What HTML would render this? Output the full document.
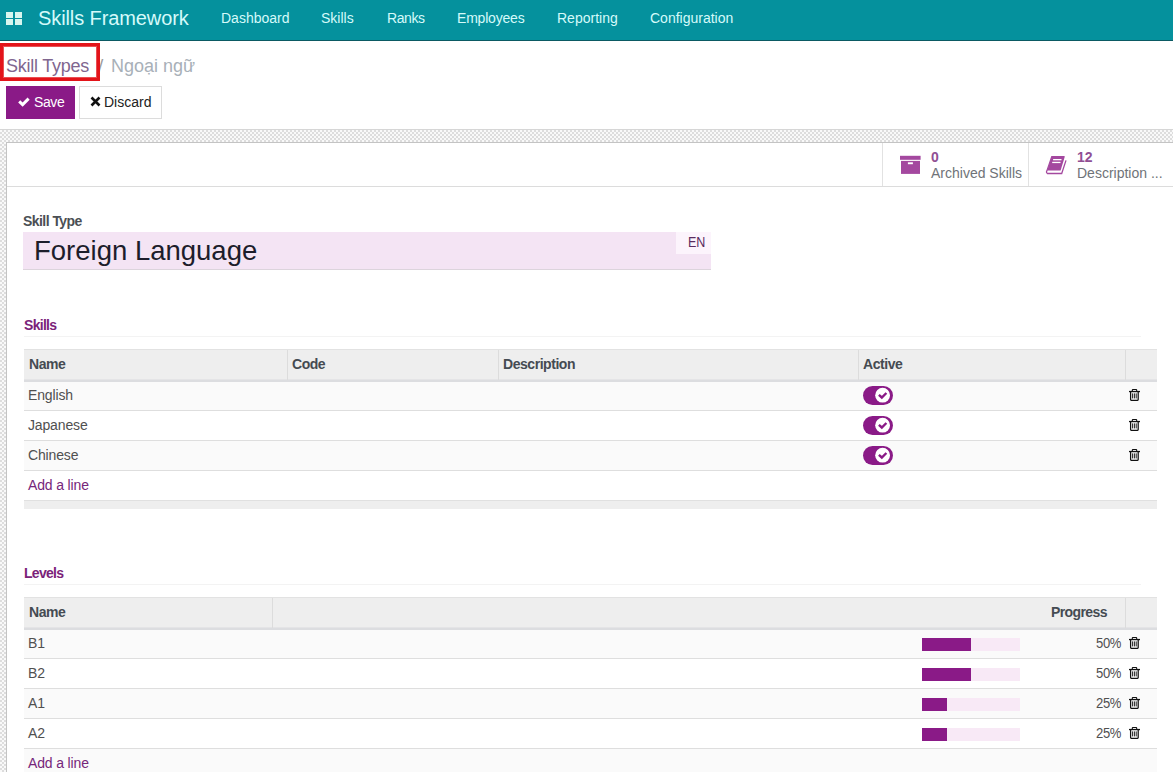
<!DOCTYPE html>
<html><head><meta charset="utf-8">
<style>
*{box-sizing:border-box;margin:0;padding:0}
html,body{width:1173px;height:772px;overflow:hidden;background:#fff;font-family:"Liberation Sans",sans-serif;position:relative}
.a{position:absolute;white-space:nowrap}
#nav{left:0;top:0;width:1173px;height:41px;background:#05919d;border-bottom:1px solid #0b5a63}
.grid{left:6px;top:12px;width:16px;height:14px}
.grid i{position:absolute;width:7px;height:6px;background:#d8f6ef}
.brand{left:38px;top:4px;font-size:20px;line-height:28px;color:#d5fafa;letter-spacing:-0.1px}
.mi{top:9px;font-size:14px;line-height:18px;color:#d5fafa}
#bc{left:6px;top:53px;font-size:18px;line-height:24px}
.redbox{left:0;top:43px;width:100px;height:38px;border:3px solid #e3141a;box-shadow:inset 0 0 0 1px rgba(227,20,26,.75)}
.btn{top:86px;height:33px;font-size:14px;line-height:32px}
#bg{left:0;top:129px;width:1173px;height:643px;border-top:1px solid #d6d6d6;
 background:repeating-conic-gradient(#dddddd 0 25%,#f9f9f9 0 50%) 0 0/4px 4px}
#sheet{left:6px;top:142px;width:1200px;height:700px;background:#fff;border:1px solid #c4c4c4}
.hl{background:#dcdde0;box-shadow:0 -1px 0 #e4e4e6}
.th{font-weight:bold;font-size:14px;line-height:18px;color:#454b52;letter-spacing:-0.45px}
.td{font-size:14px;line-height:18px;color:#505050;letter-spacing:-0.15px}
.add{font-size:14px;line-height:18px;color:#76267a;letter-spacing:-0.15px}
.sec{font-weight:bold;font-size:14px;line-height:18px;color:#7b2279;letter-spacing:-0.7px}
.rl{left:24px;width:1133px;height:1px;background:#dedede}
.rg{left:24px;width:1133px;background:#fafafa}
.cs{width:1px;height:30px;background:#dcdcdc}
</style></head><body>
<div id="nav" class="a">
  <div class="a grid"><i style="left:0;top:0"></i><i style="left:9px;top:0"></i><i style="left:0;top:7px"></i><i style="left:9px;top:7px"></i></div>
  <div class="a brand">Skills Framework</div>
  <div class="a mi" style="left:221px">Dashboard</div>
  <div class="a mi" style="left:321px">Skills</div>
  <div class="a mi" style="left:387px;letter-spacing:-0.4px">Ranks</div>
  <div class="a mi" style="left:457px;letter-spacing:-0.2px">Employees</div>
  <div class="a mi" style="left:557px">Reporting</div>
  <div class="a mi" style="left:650px">Configuration</div>
</div>
<div id="bc" class="a" style="top:54px"><span style="color:#80668f;letter-spacing:-0.25px">Skill Types</span></div>
<div class="a" style="left:98px;top:54px;font-size:19px;line-height:24px;color:#9c9c9c">/</div>
<div class="a" style="left:111px;top:54px;font-size:18px;line-height:24px;color:#a8b0b8">Ngoại ngữ</div>
<div class="a redbox"></div>
<div class="a btn" style="left:6px;width:69px;background:#8a1a87;color:#fff">
  <svg class="a" style="left:11px;top:10px" width="14" height="11" viewBox="0 0 14 11"><path d="M2.2 5.4 L5.6 8.6 L11.6 2.6" stroke="#fff" stroke-width="3" fill="none"/></svg>
  <span class="a" style="left:28px;top:0px;letter-spacing:-0.4px">Save</span>
</div>
<div class="a btn" style="left:79px;width:83px;background:#fff;border:1px solid #dcdcdc;color:#222">
  <svg class="a" style="left:10px;top:9px" width="11" height="11" viewBox="0 0 11 11"><path d="M1.5 1.5 L9.5 9.5 M9.5 1.5 L1.5 9.5" stroke="#111" stroke-width="2.6" fill="none"/></svg>
  <span class="a" style="left:24px;top:-1px">Discard</span>
</div>
<div id="bg" class="a"></div>
<div id="sheet" class="a"></div>
<div class="a" style="left:7px;top:186px;width:1166px;height:1px;background:#dcdcdc"></div>
<div class="a" style="left:882px;top:143px;width:1px;height:43px;background:#e2e2e2"></div>
<div class="a" style="left:1028px;top:143px;width:1px;height:43px;background:#e2e2e2"></div>
<svg class="a" style="left:900px;top:155px" width="21" height="20" viewBox="0 0 21 20">
  <rect x="0" y="0.8" width="20.6" height="4" fill="#a4489f"/>
  <rect x="1" y="5.9" width="19" height="13" fill="#a4489f"/>
  <rect x="7.9" y="7.3" width="5" height="1.9" fill="#fff"/>
</svg>
<div class="a" style="left:931px;top:149px;font-size:14px;line-height:16px;font-weight:bold;color:#904f94">0</div>
<div class="a" style="left:931px;top:165px;font-size:14px;line-height:16px;color:#6f7378">Archived Skills</div>
<svg class="a" style="left:1042px;top:152px" width="28" height="26" viewBox="0 0 28 26">
  <path d="M9.9 4.1 L22.2 4.1 Q22.9 4.2 22.7 5 L18.6 18.5 L5.1 18.5 Z" fill="#a4489f"/>
  <path d="M9.9 4.1 L4.9 18.6" stroke="#a4489f" stroke-width="1.2"/>
  <path d="M5.2 18.3 Q3.6 20.2 5.4 21.5 L19.7 21.5 L24 8.4" stroke="#a4489f" stroke-width="1.3" fill="none"/>
  <rect x="11.1" y="7.0" width="8.4" height="1.3" fill="#fff"/>
  <rect x="10.2" y="9.8" width="8.3" height="1.3" fill="#fff"/>
</svg>
<div class="a" style="left:1077px;top:149px;font-size:14px;line-height:16px;font-weight:bold;color:#904f94">12</div>
<div class="a" style="left:1077px;top:165px;font-size:14px;line-height:16px;color:#6f7378">Description ...</div>
<div class="a" style="left:23px;top:212px;font-size:14px;line-height:18px;font-weight:bold;color:#4b4f54;letter-spacing:-0.55px">Skill Type</div>
<div class="a" style="left:23px;top:232px;width:688px;height:38px;background:#f4e4f4;border-bottom:1px solid #dcd4dc"></div>
<div class="a" style="left:676px;top:232px;width:35px;height:22px;background:#fcf4fc"></div>
<div class="a" style="left:688px;top:233px;font-size:14.6px;line-height:18px;color:#5a2c60;transform:scaleX(0.86);transform-origin:0 0">EN</div>
<div class="a" style="left:34px;top:235px;font-size:27.5px;line-height:32px;color:#1d1d2b">Foreign Language</div>

<div class="a sec" style="left:24px;top:316px">Skills</div>
<div class="a" style="left:24px;top:336px;width:1117px;height:1px;background:#f3f3f3"></div>
<div class="a" style="left:24px;top:349px;width:1133px;height:31px;background:#eeeeee;border-top:1px solid #e2e2e2"></div>
<div class="a hl" style="left:24px;top:380px;width:1133px;height:2px"></div>
<div class="a cs" style="left:287px;top:350px"></div>
<div class="a cs" style="left:498px;top:350px"></div>
<div class="a cs" style="left:858px;top:350px"></div>
<div class="a cs" style="left:1125px;top:350px"></div>
<div class="a th" style="left:29px;top:355px">Name</div>
<div class="a th" style="left:292px;top:355px">Code</div>
<div class="a th" style="left:503px;top:355px">Description</div>
<div class="a th" style="left:863px;top:355px">Active</div>
<div class="a rg" style="top:382px;height:28px"></div>
<div class="a rl" style="top:410px"></div>
<div class="a rl" style="top:440px"></div>
<div class="a rg" style="top:441px;height:29px"></div>
<div class="a rl" style="top:470px"></div>
<div class="a" style="left:24px;top:500px;width:1133px;height:9px;background:#eeeeee;border-top:1px solid #e0e0e0"></div>
<div class="a td" style="left:28px;top:386px">English</div>
<svg class="a" style="left:863px;top:386px" width="30" height="19" viewBox="0 0 30 19"><rect x="0" y="0" width="30" height="19" rx="9.5" fill="#8a1a87"/><circle cx="19.6" cy="9.2" r="7.4" fill="#fff"/><path d="M15.9 8.9 L18.8 11.5 L23.4 7" stroke="#8a1a87" stroke-width="2.4" fill="none"/></svg>
<svg class="a" style="left:1129px;top:389px" width="11" height="12" viewBox="0 0 11 12"><path d="M3.3 2 L3.3 1.2 Q3.3 0.5 4 0.5 L7 0.5 Q7.7 0.5 7.7 1.2 L7.7 2" stroke="#111" stroke-width="1.1" fill="none"/><rect x="0" y="1.9" width="11" height="1.3" fill="#111"/><path d="M1.6 3 L1.6 10.4 Q1.6 11.4 2.6 11.4 L8.2 11.4 Q9.2 11.4 9.2 10.4 L9.2 3" stroke="#111" stroke-width="1.25" fill="none"/><rect x="3.1" y="4.4" width="1" height="5" fill="#222"/><rect x="4.9" y="4.4" width="1" height="5" fill="#222"/><rect x="6.7" y="4.4" width="1" height="5" fill="#222"/></svg>
<div class="a td" style="left:28px;top:416px">Japanese</div>
<svg class="a" style="left:863px;top:416px" width="30" height="19" viewBox="0 0 30 19"><rect x="0" y="0" width="30" height="19" rx="9.5" fill="#8a1a87"/><circle cx="19.6" cy="9.2" r="7.4" fill="#fff"/><path d="M15.9 8.9 L18.8 11.5 L23.4 7" stroke="#8a1a87" stroke-width="2.4" fill="none"/></svg>
<svg class="a" style="left:1129px;top:419px" width="11" height="12" viewBox="0 0 11 12"><path d="M3.3 2 L3.3 1.2 Q3.3 0.5 4 0.5 L7 0.5 Q7.7 0.5 7.7 1.2 L7.7 2" stroke="#111" stroke-width="1.1" fill="none"/><rect x="0" y="1.9" width="11" height="1.3" fill="#111"/><path d="M1.6 3 L1.6 10.4 Q1.6 11.4 2.6 11.4 L8.2 11.4 Q9.2 11.4 9.2 10.4 L9.2 3" stroke="#111" stroke-width="1.25" fill="none"/><rect x="3.1" y="4.4" width="1" height="5" fill="#222"/><rect x="4.9" y="4.4" width="1" height="5" fill="#222"/><rect x="6.7" y="4.4" width="1" height="5" fill="#222"/></svg>
<div class="a td" style="left:28px;top:446px">Chinese</div>
<svg class="a" style="left:863px;top:446px" width="30" height="19" viewBox="0 0 30 19"><rect x="0" y="0" width="30" height="19" rx="9.5" fill="#8a1a87"/><circle cx="19.6" cy="9.2" r="7.4" fill="#fff"/><path d="M15.9 8.9 L18.8 11.5 L23.4 7" stroke="#8a1a87" stroke-width="2.4" fill="none"/></svg>
<svg class="a" style="left:1129px;top:449px" width="11" height="12" viewBox="0 0 11 12"><path d="M3.3 2 L3.3 1.2 Q3.3 0.5 4 0.5 L7 0.5 Q7.7 0.5 7.7 1.2 L7.7 2" stroke="#111" stroke-width="1.1" fill="none"/><rect x="0" y="1.9" width="11" height="1.3" fill="#111"/><path d="M1.6 3 L1.6 10.4 Q1.6 11.4 2.6 11.4 L8.2 11.4 Q9.2 11.4 9.2 10.4 L9.2 3" stroke="#111" stroke-width="1.25" fill="none"/><rect x="3.1" y="4.4" width="1" height="5" fill="#222"/><rect x="4.9" y="4.4" width="1" height="5" fill="#222"/><rect x="6.7" y="4.4" width="1" height="5" fill="#222"/></svg>
<div class="a add" style="left:28px;top:476px">Add a line</div>
<div class="a sec" style="left:24px;top:564px">Levels</div>
<div class="a" style="left:24px;top:584px;width:1117px;height:1px;background:#f3f3f3"></div>
<div class="a" style="left:24px;top:597px;width:1133px;height:31px;background:#eeeeee;border-top:1px solid #e2e2e2"></div>
<div class="a hl" style="left:24px;top:628px;width:1133px;height:2px"></div>
<div class="a cs" style="left:272px;top:598px"></div>
<div class="a cs" style="left:1125px;top:598px"></div>
<div class="a th" style="left:29px;top:603px">Name</div>
<div class="a th" style="left:1051px;top:603px;letter-spacing:-0.6px">Progress</div>
<div class="a rg" style="top:630px;height:28px"></div>
<div class="a rl" style="top:658px"></div>
<div class="a rl" style="top:688px"></div>
<div class="a rg" style="top:689px;height:29px"></div>
<div class="a rl" style="top:718px"></div>
<div class="a rl" style="top:748px"></div>
<div class="a rg" style="top:749px;height:40px"></div>
<div class="a td" style="left:28px;top:634px">B1</div>
<div class="a" style="left:922px;top:638px;width:98px;height:13px;background:#f8e9f6"></div>
<div class="a" style="left:922px;top:638px;width:49px;height:13px;background:#8a1a87"></div>
<div class="a td" style="left:1096px;top:634px;font-size:14.5px;letter-spacing:-0.4px;transform:scaleX(0.9);transform-origin:0 0">50%</div>
<svg class="a" style="left:1129px;top:637px" width="11" height="12" viewBox="0 0 11 12"><path d="M3.3 2 L3.3 1.2 Q3.3 0.5 4 0.5 L7 0.5 Q7.7 0.5 7.7 1.2 L7.7 2" stroke="#111" stroke-width="1.1" fill="none"/><rect x="0" y="1.9" width="11" height="1.3" fill="#111"/><path d="M1.6 3 L1.6 10.4 Q1.6 11.4 2.6 11.4 L8.2 11.4 Q9.2 11.4 9.2 10.4 L9.2 3" stroke="#111" stroke-width="1.25" fill="none"/><rect x="3.1" y="4.4" width="1" height="5" fill="#222"/><rect x="4.9" y="4.4" width="1" height="5" fill="#222"/><rect x="6.7" y="4.4" width="1" height="5" fill="#222"/></svg>
<div class="a td" style="left:28px;top:664px">B2</div>
<div class="a" style="left:922px;top:668px;width:98px;height:13px;background:#f8e9f6"></div>
<div class="a" style="left:922px;top:668px;width:49px;height:13px;background:#8a1a87"></div>
<div class="a td" style="left:1096px;top:664px;font-size:14.5px;letter-spacing:-0.4px;transform:scaleX(0.9);transform-origin:0 0">50%</div>
<svg class="a" style="left:1129px;top:667px" width="11" height="12" viewBox="0 0 11 12"><path d="M3.3 2 L3.3 1.2 Q3.3 0.5 4 0.5 L7 0.5 Q7.7 0.5 7.7 1.2 L7.7 2" stroke="#111" stroke-width="1.1" fill="none"/><rect x="0" y="1.9" width="11" height="1.3" fill="#111"/><path d="M1.6 3 L1.6 10.4 Q1.6 11.4 2.6 11.4 L8.2 11.4 Q9.2 11.4 9.2 10.4 L9.2 3" stroke="#111" stroke-width="1.25" fill="none"/><rect x="3.1" y="4.4" width="1" height="5" fill="#222"/><rect x="4.9" y="4.4" width="1" height="5" fill="#222"/><rect x="6.7" y="4.4" width="1" height="5" fill="#222"/></svg>
<div class="a td" style="left:28px;top:694px">A1</div>
<div class="a" style="left:922px;top:698px;width:98px;height:13px;background:#f8e9f6"></div>
<div class="a" style="left:922px;top:698px;width:25px;height:13px;background:#8a1a87"></div>
<div class="a td" style="left:1096px;top:694px;font-size:14.5px;letter-spacing:-0.4px;transform:scaleX(0.9);transform-origin:0 0">25%</div>
<svg class="a" style="left:1129px;top:697px" width="11" height="12" viewBox="0 0 11 12"><path d="M3.3 2 L3.3 1.2 Q3.3 0.5 4 0.5 L7 0.5 Q7.7 0.5 7.7 1.2 L7.7 2" stroke="#111" stroke-width="1.1" fill="none"/><rect x="0" y="1.9" width="11" height="1.3" fill="#111"/><path d="M1.6 3 L1.6 10.4 Q1.6 11.4 2.6 11.4 L8.2 11.4 Q9.2 11.4 9.2 10.4 L9.2 3" stroke="#111" stroke-width="1.25" fill="none"/><rect x="3.1" y="4.4" width="1" height="5" fill="#222"/><rect x="4.9" y="4.4" width="1" height="5" fill="#222"/><rect x="6.7" y="4.4" width="1" height="5" fill="#222"/></svg>
<div class="a td" style="left:28px;top:724px">A2</div>
<div class="a" style="left:922px;top:728px;width:98px;height:13px;background:#f8e9f6"></div>
<div class="a" style="left:922px;top:728px;width:25px;height:13px;background:#8a1a87"></div>
<div class="a td" style="left:1096px;top:724px;font-size:14.5px;letter-spacing:-0.4px;transform:scaleX(0.9);transform-origin:0 0">25%</div>
<svg class="a" style="left:1129px;top:727px" width="11" height="12" viewBox="0 0 11 12"><path d="M3.3 2 L3.3 1.2 Q3.3 0.5 4 0.5 L7 0.5 Q7.7 0.5 7.7 1.2 L7.7 2" stroke="#111" stroke-width="1.1" fill="none"/><rect x="0" y="1.9" width="11" height="1.3" fill="#111"/><path d="M1.6 3 L1.6 10.4 Q1.6 11.4 2.6 11.4 L8.2 11.4 Q9.2 11.4 9.2 10.4 L9.2 3" stroke="#111" stroke-width="1.25" fill="none"/><rect x="3.1" y="4.4" width="1" height="5" fill="#222"/><rect x="4.9" y="4.4" width="1" height="5" fill="#222"/><rect x="6.7" y="4.4" width="1" height="5" fill="#222"/></svg>
<div class="a add" style="left:28px;top:754px">Add a line</div>
</body></html>
